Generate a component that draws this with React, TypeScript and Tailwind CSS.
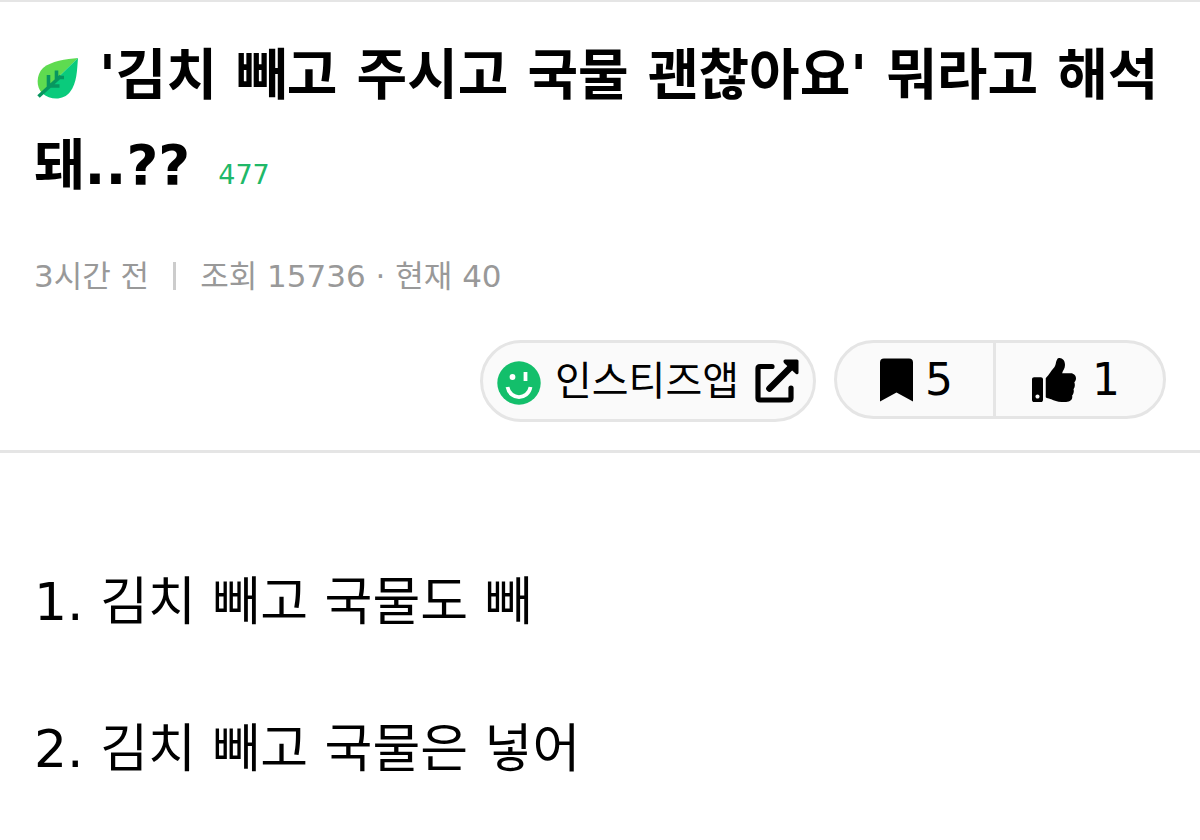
import React from 'react'
import { FaThumbsUp } from 'react-icons/fa'

const post = {
    title: "'김치 빼고 주시고 국물 괜찮아요' 뭐라고 해석돼..??",
    comments: 477,
    time: '3시간 전',
    views: 15736,
    online: 40,
    scraps: 5,
    likes: 1,
    lines: ['1. 김치 빼고 국물도 빼', '2. 김치 빼고 국물은 넣어'],
}

const LeafIcon = () => (
    <svg viewBox="0 0 45 44" className="mr-5 inline-block h-11 w-[45px]" aria-hidden="true">
        <path d="M44 1C32 2 17 4 9 11C2 18 2 30 8 36Z" fill="#5edb50" />
        <path d="M44 1C43 13 43 26 36 35C30 43 17 44 8 36Z" fill="#0acb7c" />
        <path d="M4.500 39.500L27 19M14.500 31V18M14 29H25.500M22.500 23V13.500M22 20.500H30" fill="none" stroke="#07965f" strokeWidth="3.6" />
    </svg>
)

const SmileIcon = () => (
    <svg viewBox="0 -4 44 48" className="h-12 w-11" aria-hidden="true">
        <circle cx="22" cy="22" r="21.7" fill="#13bf6b" />
        <circle cx="15.5" cy="16" r="2.9" fill="#fff" />
        <path d="M28.500 11V20" stroke="#fff" strokeWidth="3.8" />
        <path d="M10.500 26C13 39.500 31 39.500 33.500 26" fill="none" stroke="#fff" strokeWidth="3.8" />
    </svg>
)

const ExternalIcon = () => (
    <svg viewBox="0 0 44 44" className="h-11 w-11" aria-hidden="true">
        <path d="M17 7.500H5Q3 7.500 3 9.500V39Q3 41 5 41H34Q36 41 36 39V29" fill="none" stroke="#000" strokeWidth="5.2" strokeLinecap="round" />
        <path d="M14.500 29.500L36 8" stroke="#000" strokeWidth="6.6" strokeLinecap="round" />
        <path d="M30 0.500H42Q43.500 0.500 43.500 2V14Q43 16 41 15L29 4Q27.500 1 30 0.500Z" fill="#000" />
    </svg>
)

const BookmarkIcon = () => (
    <svg viewBox="0 0 33 44" className="h-11 w-[33px]" aria-hidden="true">
        <path d="M4 0.500H29Q33 0.500 33 4.500V43.500L16.500 34.500L0 43.500V4.500Q0 0.500 4 0.500Z" fill="#000" />
    </svg>
)

const App = () => {
    return (
        <main className="min-h-screen border-t-2 border-[#e5e5e5] bg-white font-['DejaVu_Sans','Noto_Sans_CJK_KR',sans-serif] text-black">
            <header className="border-b-3 border-[#e5e5e5] px-[34px] pt-7 pb-7">
                <div className="text-[55px] leading-[90px]">
                    <LeafIcon />
                    <h1 className="inline font-bold">{post.title}</h1>
                    <a href="#comments" className="ml-7 text-[27px] text-[#20b868]">{post.comments}</a>
                </div>
                <div className="mt-8 flex items-center text-[31px] leading-12 text-[#999]">
                    <span>{post.time}</span>
                    <span className="mx-6 h-7 w-[3px] bg-[#ccc]" />
                    <span>조회 {post.views} · 현재 {post.online}</span>
                </div>
                <div className="mt-10 flex items-start justify-end gap-[18px] leading-none">
                    <button type="button" className="flex h-[82px] items-center rounded-full border-3 border-[#e5e5e5] bg-[#fafafa] px-[14px] text-[40px]">
                        <SmileIcon />
                        <span className="mr-4 ml-[14px]">인스티즈앱</span>
                        <ExternalIcon />
                    </button>
                    <div className="flex h-[79px] rounded-full border-3 border-[#e5e5e5] bg-[#fafafa] text-[44px]">
                        <button type="button" className="flex items-center gap-3 border-r-3 border-[#e5e5e5] pr-10 pl-[43px]">
                            <BookmarkIcon />
                            <span>{post.scraps}</span>
                        </button>
                        <button type="button" className="flex items-center gap-4 pr-[43px] pl-9">
                            <FaThumbsUp className="h-11 w-11" />
                            <span>{post.likes}</span>
                        </button>
                    </div>
                </div>
            </header>
            <article className="px-[34px] pt-28 text-[52px] leading-[74px]">
                {post.lines.map((line) => (
                    <p key={line} className="mb-[73px] last:mb-0">{line}</p>
                ))}
            </article>
        </main>
    )
}

export default App
